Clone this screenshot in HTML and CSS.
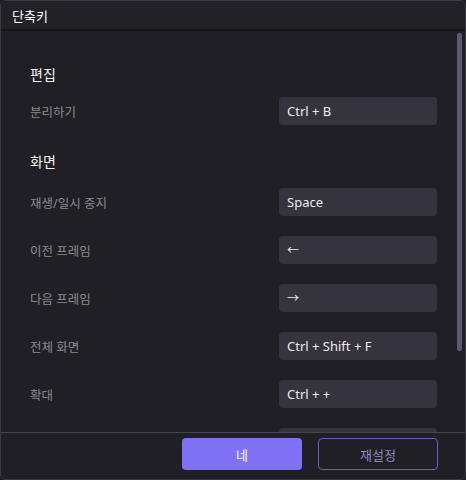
FILE: index.html
```html
<!DOCTYPE html>
<html lang="ko">
<head>
<meta charset="utf-8">
<title>단축키</title>
<link rel="stylesheet" href="styles.css">
</head>
<body>
<div class="dialog">
  <div class="header"><span class="title">단축키</span></div>
  <div class="content">
    <div class="scroll-thumb"></div>
    <div class="section-title first">편집</div>
    <div class="row"><span class="label">분리하기</span><span class="key">Ctrl + B</span></div>
    <div class="section-title">화면</div>
    <div class="row"><span class="label">재생/일시 중지</span><span class="key">Space</span></div>
    <div class="row"><span class="label">이전 프레임</span><span class="key arrow">←</span></div>
    <div class="row"><span class="label">다음 프레임</span><span class="key arrow">→</span></div>
    <div class="row"><span class="label">전체 화면</span><span class="key">Ctrl + Shift + F</span></div>
    <div class="row"><span class="label">확대</span><span class="key">Ctrl + +</span></div>
    <div class="row"><span class="label"></span><span class="key"></span></div>
  </div>
  <div class="footer">
    <button class="btn primary">네</button>
    <button class="btn outline">재설정</button>
  </div>
</div>
</body>
</html>
```
FILE: styles.css
```css
html, body {
  margin: 0;
  padding: 0;
  background: #1f1e25;
}
body {
  font-family: "Noto Sans", "Noto Sans CJK KR", sans-serif;
  width: 466px;
  height: 480px;
  overflow: hidden;
}
.dialog {
  box-sizing: border-box;
  width: 466px;
  height: 480px;
  border: 1px solid #3b3a41;
  border-radius: 6px;
  background: #201f26;
  display: flex;
  flex-direction: column;
  overflow: hidden;
}
.header {
  height: 28px;
  flex: none;
  display: flex;
  align-items: center;
  padding-left: 11px;
  background: #222128;
  border-bottom: 2px solid #141318;
}
.title {
  color: #ffffff;
  font-size: 13px;
}
.content {
  position: relative;
  flex: 1;
  overflow: hidden;
  padding: 34px 28px 0 29px;
}
.scroll-thumb {
  position: absolute;
  right: 3px;
  top: 2px;
  width: 5px;
  height: 318px;
  background: #5a5870;
  border-radius: 2px;
}
.section-title {
  color: #f4f4f4;
  font-size: 14px;
  font-weight: 400;
  line-height: 20px;
  height: 20px;
  margin: 27px 0 16px;
}
.section-title.first {
  margin: 0 0 12px;
}
.row {
  display: flex;
  align-items: center;
  justify-content: space-between;
  height: 28px;
  margin-bottom: 20px;
}
.label {
  color: #8b8a91;
  font-size: 12.5px;
}
.key {
  box-sizing: border-box;
  width: 158px;
  height: 28px;
  display: flex;
  align-items: center;
  padding-left: 8px;
  background: #35333d;
  border-radius: 4px;
  color: #ececec;
  font-size: 13px;
}
.key.arrow {
  font-size: 12px;
}
.footer {
  flex: none;
  height: 47px;
  border-top: 1px solid #46454d;
  display: flex;
  justify-content: flex-end;
  align-items: flex-start;
  gap: 16px;
  padding: 5px 27px 0 0;
  box-sizing: border-box;
}
.btn {
  width: 120px;
  height: 32px;
  border-radius: 4px;
  font-family: "Noto Sans CJK KR", sans-serif;
  font-size: 13px;
  box-sizing: border-box;
}
.primary {
  background: #7f70f6;
  border: none;
  color: #ffffff;
}
.outline {
  background: transparent;
  border: 1px solid #6a5fc4;
  color: #8f88c4;
}
```
